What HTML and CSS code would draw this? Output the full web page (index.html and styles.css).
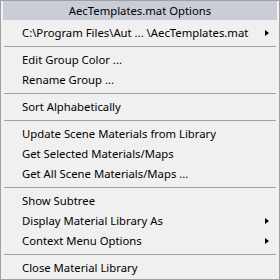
FILE: index.html
```html
<!DOCTYPE html>
<html lang="en">
  <head>
    <meta charset="utf-8" />
    <title>AecTemplates.mat Options</title>
    <link rel="stylesheet" href="styles.css">
  </head>
  <body>
    <div class="menu">
      <div class="menu__title">AecTemplates.mat Options</div>
      <div class="menu__item menu__item--sub">C:\Program Files\Aut ... \AecTemplates.mat</div>
      <div class="menu__sep"></div>
      <div class="menu__item">Edit Group Color ...</div>
      <div class="menu__item">Rename Group ...</div>
      <div class="menu__sep"></div>
      <div class="menu__item">Sort Alphabetically</div>
      <div class="menu__sep"></div>
      <div class="menu__item">Update Scene Materials from Library</div>
      <div class="menu__item">Get Selected Materials/Maps</div>
      <div class="menu__item">Get All Scene Materials/Maps ...</div>
      <div class="menu__sep"></div>
      <div class="menu__item">Show Subtree</div>
      <div class="menu__item menu__item--sub">Display Material Library As</div>
      <div class="menu__item menu__item--sub">Context Menu Options</div>
      <div class="menu__sep"></div>
      <div class="menu__item">Close Material Library</div>
    </div>
  </body>
</html>
```

FILE: styles.css
```css
body {
  margin: 0;
  font-family: "Noto Sans", "Open Sans", sans-serif;
  font-size: 11.3px;
  color: #000;
}

.menu {
  width: 280px;
  height: 280px;
  box-sizing: border-box;
  border: 1px solid #a0a0a0;
  background: #f0f0f0;
  display: flex;
  flex-direction: column;
  padding: 0 2px;
}

.menu__title {
  height: 19px;
  line-height: 19px;
  text-align: center;
  background: #c9cdd6;
  margin-bottom: 3px;
}

.menu__item {
  height: 20px;
  line-height: 20px;
  padding-left: 19px;
  position: relative;
  white-space: nowrap;
}

.menu__item--sub:after {
  content: "";
  position: absolute;
  right: 8px;
  top: 7px;
  border-left: 4px solid #000;
  border-top: 3.5px solid transparent;
  border-bottom: 3.5px solid transparent;
}

.menu__sep {
  height: 1px;
  background: #a0a0a0;
  margin: 3px 1px 3px 1px;
}
```
